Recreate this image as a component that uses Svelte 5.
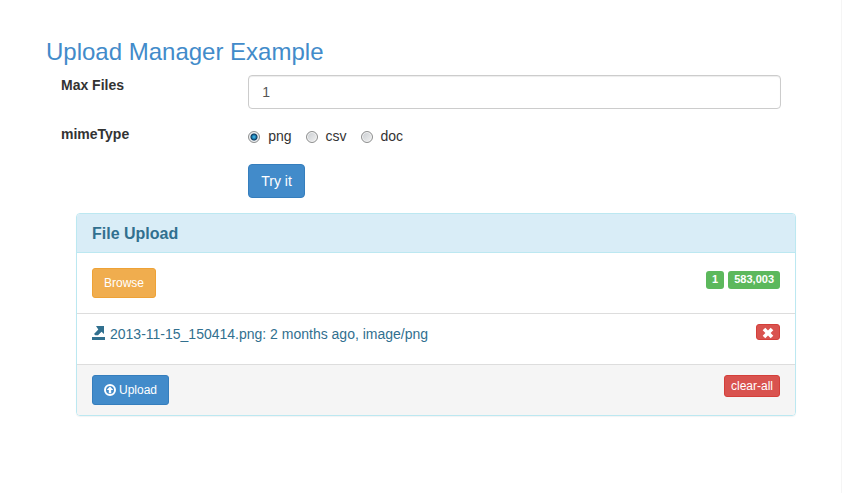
<script>
  let maxFiles = $state('1');
  let mime = $state('png');
  const types = ['png', 'csv', 'doc'];
</script>

<div class="page">
  <main>
    <h3>Upload Manager Example</h3>

    <form onsubmit={(e) => e.preventDefault()}>
      <div class="row">
        <label class="name" for="max-files">Max Files</label>
        <input id="max-files" class="control" type="text" bind:value={maxFiles} />
      </div>
      <div class="row mime" role="radiogroup" aria-labelledby="mime-label">
        <span class="name" id="mime-label">mimeType</span>
        <div class="radios">
          {#each types as type}
            <label class="radio">
              <input type="radio" name="mime" value={type} bind:group={mime} />
              <span>{type}</span>
            </label>
          {/each}
        </div>
      </div>
      <div class="row">
        <span></span>
        <div><button class="btn primary" type="submit">Try it</button></div>
      </div>
    </form>

    <section class="panel">
      <header><h4>File Upload</h4></header>
      <div class="body">
        <button class="btn small warning" type="button">Browse</button>
        <div class="badges">
          <span class="badge">1</span>
          <span class="badge">583,003</span>
        </div>
      </div>
      <div class="item">
        <div class="file">
          <svg width="14" height="14" viewBox="0 0 14 14" aria-hidden="true">
            <path fill="currentColor" d="M0 11h13v3H0zM4 0h8v8L9.500 5.800 6 9.300H3.300L2 8l4.300-4.400z" />
          </svg>
          <span>2013-11-15_150414.png: 2 months ago, image/png</span>
        </div>
        <button class="btn remove danger" type="button" aria-label="Remove file">
          <svg width="12" height="12" viewBox="0 0 12 12" aria-hidden="true">
            <path fill="currentColor" d="M3.300 0.700 6 3.400 8.700 0.700 11.300 3.300 8.600 6 11.300 8.700 8.700 11.300 6 8.600 3.300 11.300 0.700 8.700 3.400 6 0.700 3.300z" />
          </svg>
        </button>
      </div>
      <footer>
        <button class="btn small primary" type="button">
          <svg width="12" height="12" viewBox="0 0 12 12" aria-hidden="true">
            <circle cx="6" cy="6" r="5" fill="none" stroke="currentColor" stroke-width="2" />
            <path fill="currentColor" d="M6 2.500 9.300 6H7.200v3.200H4.800V6H2.700z" />
          </svg>
          <span>Upload</span>
        </button>
        <button class="btn tiny danger" type="button">clear-all</button>
      </footer>
    </section>
  </main>
</div>

<style>
  .page {
    box-sizing: border-box;
    min-height: 100vh;
    padding: 39px 45px 20px 46px;
    border-right: 1px solid #f5f5f5;
    background: #fff;
    color: #333;
    font: 14px/20px "Liberation Sans", Arial, sans-serif;
  }
  .page :global(*) {
    box-sizing: border-box;
  }
  main {
    max-width: 750px;
    margin: 0 auto;
  }
  h3 {
    margin: 0 0 10px;
    color: #428bca;
    font-size: 24px;
    font-weight: 400;
    line-height: 26px;
  }
  form {
    display: flex;
    flex-direction: column;
    gap: 15px;
    padding: 0 15px;
  }
  .row {
    display: grid;
    grid-template-columns: minmax(90px, 26%) 1fr;
  }
  .name {
    font-weight: 700;
  }
  .control {
    width: 100%;
    height: 34px;
    padding: 6px 13px;
    border: 1px solid #ccc;
    border-radius: 4px;
    background: #fff;
    box-shadow: inset 0 1px 1px rgba(0, 0, 0, 0.075);
    color: #555;
    font: inherit;
  }
  .mime {
    min-height: 25px;
  }
  .radios {
    display: flex;
    align-items: flex-start;
    gap: 14px;
    padding-top: 2px;
  }
  .radio {
    display: flex;
    align-items: center;
    gap: 8px;
  }
  .radio input {
    appearance: none;
    width: 12px;
    height: 12px;
    margin: 2px 0 0;
    border: 1px solid #8e8f8f;
    border-radius: 50%;
    background: linear-gradient(135deg, #c8ccd0, #f2f2f2);
    box-shadow: inset 0 0 0 1px #f4f4f4;
  }
  .radio input:checked {
    background: radial-gradient(circle, #4fc3ee 0, #1878ac 2px, #123a5c 3px, #d4dce2 4px);
  }
  .btn {
    display: inline-flex;
    align-items: center;
    justify-content: center;
    gap: 3px;
    height: 34px;
    padding: 0 12px;
    border: 1px solid;
    border-radius: 4px;
    color: #fff;
    font: inherit;
    cursor: pointer;
  }
  .primary {
    border-color: #357ebd;
    background: #428bca;
  }
  .warning {
    border-color: #eea236;
    background: #f0ad4e;
  }
  .danger {
    border-color: #d43f3a;
    background: #d9534f;
  }
  .small {
    height: 30px;
    padding: 0 11px;
    border-radius: 3px;
    font-size: 12px;
  }
  .tiny {
    height: 22px;
    padding: 0 6px;
    border-radius: 3px;
    font-size: 12px;
  }
  .remove {
    width: 24px;
    height: 16px;
    padding: 1px 0 0;
    border-radius: 3px;
  }
  .panel {
    margin: 15px 0 0 30px;
    overflow: hidden;
    border: 1px solid #bce8f1;
    border-radius: 4px;
    box-shadow: 0 1px 1px rgba(0, 0, 0, 0.05);
  }
  header {
    padding: 10px 15px 9px;
    border-bottom: 1px solid #bce8f1;
    background: #d9edf7;
  }
  h4 {
    margin: 0;
    color: #31708f;
    font-size: 16px;
    line-height: 19px;
  }
  .body,
  .item,
  footer {
    display: flex;
    align-items: flex-start;
    justify-content: space-between;
  }
  .body {
    padding: 15px;
  }
  .badges {
    display: flex;
    gap: 4px;
    padding-top: 3px;
  }
  .badge {
    height: 18px;
    padding: 0 6px;
    border-radius: 3px;
    background: #5cb85c;
    color: #fff;
    font-size: 11px;
    font-weight: 700;
    line-height: 17px;
  }
  .item {
    min-height: 51px;
    padding: 10px 15px;
    border-top: 1px solid #ddd;
  }
  .file {
    display: flex;
    gap: 4px;
    color: #31708f;
  }
  .file svg {
    flex: none;
    margin-top: 2px;
  }
  footer {
    padding: 10px 15px;
    border-top: 1px solid #ddd;
    background: #f5f5f5;
  }
</style>
